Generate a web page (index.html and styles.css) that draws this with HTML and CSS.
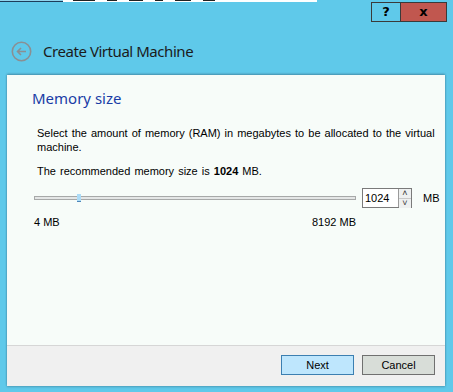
FILE: index.html
```
<!DOCTYPE html>
<html lang="en">
<head>
    <meta charset="UTF-8">
    <meta name="viewport" content="width=device-width, initial-scale=1.0">
    <title>Create Virtual Machine</title>
    <link rel="stylesheet" href="styles.css">
</head>
<body>
    <div class="desktop">
        <div class="desktop-left"></div>
        <div class="desktop-app">
            <span class="mark w22"></span><span class="mark w10"></span><span class="mark w14"></span><span class="mark w8"></span><span class="mark w16"></span><span class="mark w12"></span>
        </div>
    </div>
    <div class="window">
        <div class="titlebar">
            <button class="tb-btn help">?</button>
            <button class="tb-btn close">x</button>
        </div>
        <div class="header">
            <svg class="back" width="21" height="21" viewBox="0 0 21 21">
                <circle cx="10.5" cy="10.5" r="9.2" fill="none" stroke="#8a8f93" stroke-width="1.6"/>
                <path d="M15 10.5H6.5M10 7L6.5 10.5L10 14" fill="none" stroke="#8a8f93" stroke-width="1.6"/>
            </svg>
            <h1>Create Virtual Machine</h1>
        </div>
        <div class="panel">
            <div class="content">
                <h2>Memory size</h2>
                <p class="desc">Select the amount of memory (RAM) in megabytes to be allocated to the virtual machine.</p>
                <p class="desc">The recommended memory size is <b>1024</b> MB.</p>
                <div class="slider-row">
                    <div class="track">
                        <div class="thumb"></div>
                    </div>
                    <div class="spin">
                        <input class="spin-value" type="text" value="1024">
                        <div class="spin-arrows">
                            <span class="arrow">&#708;</span>
                            <span class="arrow">&#709;</span>
                        </div>
                    </div>
                    <span class="unit">MB</span>
                </div>
                <div class="range-labels">
                    <span>4 MB</span>
                    <span>8192 MB</span>
                </div>
            </div>
            <div class="footer">
                <button class="btn primary">Next</button>
                <button class="btn">Cancel</button>
            </div>
        </div>
    </div>
</body>
</html>
```
FILE: styles.css
```
body {
    margin: 0;
    width: 453px;
    height: 392px;
    overflow: hidden;
    background-color: #5fc9ea;
    font-family: "Liberation Sans", Arial, sans-serif;
    font-size: 11px;
    color: #000;
}
.desktop {
    display: flex;
    height: 2px;
}
.desktop-left {
    width: 63px;
    background: #8fd3ec;
    border-bottom: 1px solid #1d3c5a;
    box-sizing: border-box;
}
.desktop-app {
    width: 244px;
    background: #fff;
    display: flex;
    gap: 12px;
    padding-left: 10px;
}
.mark {
    height: 1px;
    background: #222;
}
.w22 { width: 22px; }
.w10 { width: 10px; }
.w14 { width: 14px; }
.w8 { width: 8px; }
.w16 { width: 16px; }
.w12 { width: 12px; }
.titlebar {
    display: flex;
    justify-content: flex-end;
    height: 20px;
    padding-right: 6px;
}
.tb-btn {
    height: 20px;
    border: 1px solid #3a3a3a;
    font-family: "DejaVu Sans", sans-serif;
    font-weight: bold;
    font-size: 13px;
    line-height: 16px;
    padding: 0;
    color: #000;
}
.help {
    width: 29px;
    background: #5fc9ea;
    border-right: none;
}
.close {
    width: 47px;
    background: #c1574f;
}
.header {
    display: flex;
    align-items: center;
    height: 51px;
    padding: 7px 0 0 11px;
    box-sizing: border-box;
}
.back {
    margin-right: 11px;
}
h1 {
    margin: 0;
    font-family: "Noto Sans", sans-serif;
    font-weight: normal;
    font-size: 15px;
    letter-spacing: -0.45px;
    color: #1b1b1b;
}
.panel {
    margin: 2px 8px 0 7px;
    box-shadow: 0 -1px 2px rgba(40, 70, 90, 0.45), 0 1px 2px rgba(40, 70, 90, 0.3);
}
.content {
    height: 270px;
    background: #f7fcf9;
    padding: 14px 0 0 25px;
    box-sizing: border-box;
}
h2 {
    margin: 0 0 18px;
    font-family: "Noto Sans", sans-serif;
    font-weight: normal;
    font-size: 15px;
    line-height: 19px;
    color: #1a3ca6;
}
.desc {
    margin: 0 0 10px 5px;
    width: 408px;
    line-height: 14px;
    word-spacing: 1px;
}
.slider-row {
    display: flex;
    align-items: center;
    margin: 10px 0 0 2px;
    height: 20px;
}
.track {
    position: relative;
    width: 322px;
    height: 4px;
    background: #e4e6e6;
    border: 1px solid #a7a9a9;
    box-sizing: border-box;
}
.thumb {
    position: absolute;
    left: 42px;
    top: -3px;
    width: 4px;
    height: 7px;
    background: #acdcf8;
    border-bottom: 1px solid #4f86b8;
}
.spin {
    display: flex;
    margin-left: 6px;
    height: 20px;
    border: 1px solid #7a7a7a;
    box-sizing: border-box;
    background: #fff;
}
.spin-value {
    width: 35px;
    border: none;
    padding: 0 0 0 2px;
    font-family: "Liberation Sans", Arial, sans-serif;
    font-size: 11px;
    background: #fff;
    outline: none;
    box-sizing: border-box;
}
.spin-arrows {
    display: flex;
    flex-direction: column;
    width: 12px;
    border-left: 1px solid #9a9a9a;
}
.arrow {
    flex: 1;
    font-size: 9px;
    line-height: 9px;
    text-align: center;
    background: #eef0f0;
    color: #333;
}
.arrow + .arrow {
    border-top: 1px solid #c8c8c8;
}
.unit {
    margin-left: 11px;
}
.range-labels {
    display: flex;
    justify-content: space-between;
    width: 322px;
    margin: 8px 0 0 2px;
}
.footer {
    display: flex;
    justify-content: flex-end;
    gap: 8px;
    height: 41px;
    padding: 9px 10px 0 0;
    box-sizing: border-box;
    background: #f0f0f0;
    border-top: 1px solid #d6d6d6;
}
.btn {
    width: 73px;
    height: 20px;
    font-family: "Liberation Sans", Arial, sans-serif;
    font-size: 11px;
    background: #d8ddd8;
    border: 1px solid #707070;
    padding: 0;
}
.primary {
    background: #bee6fd;
    border-color: #3c7fb1;
}
```
